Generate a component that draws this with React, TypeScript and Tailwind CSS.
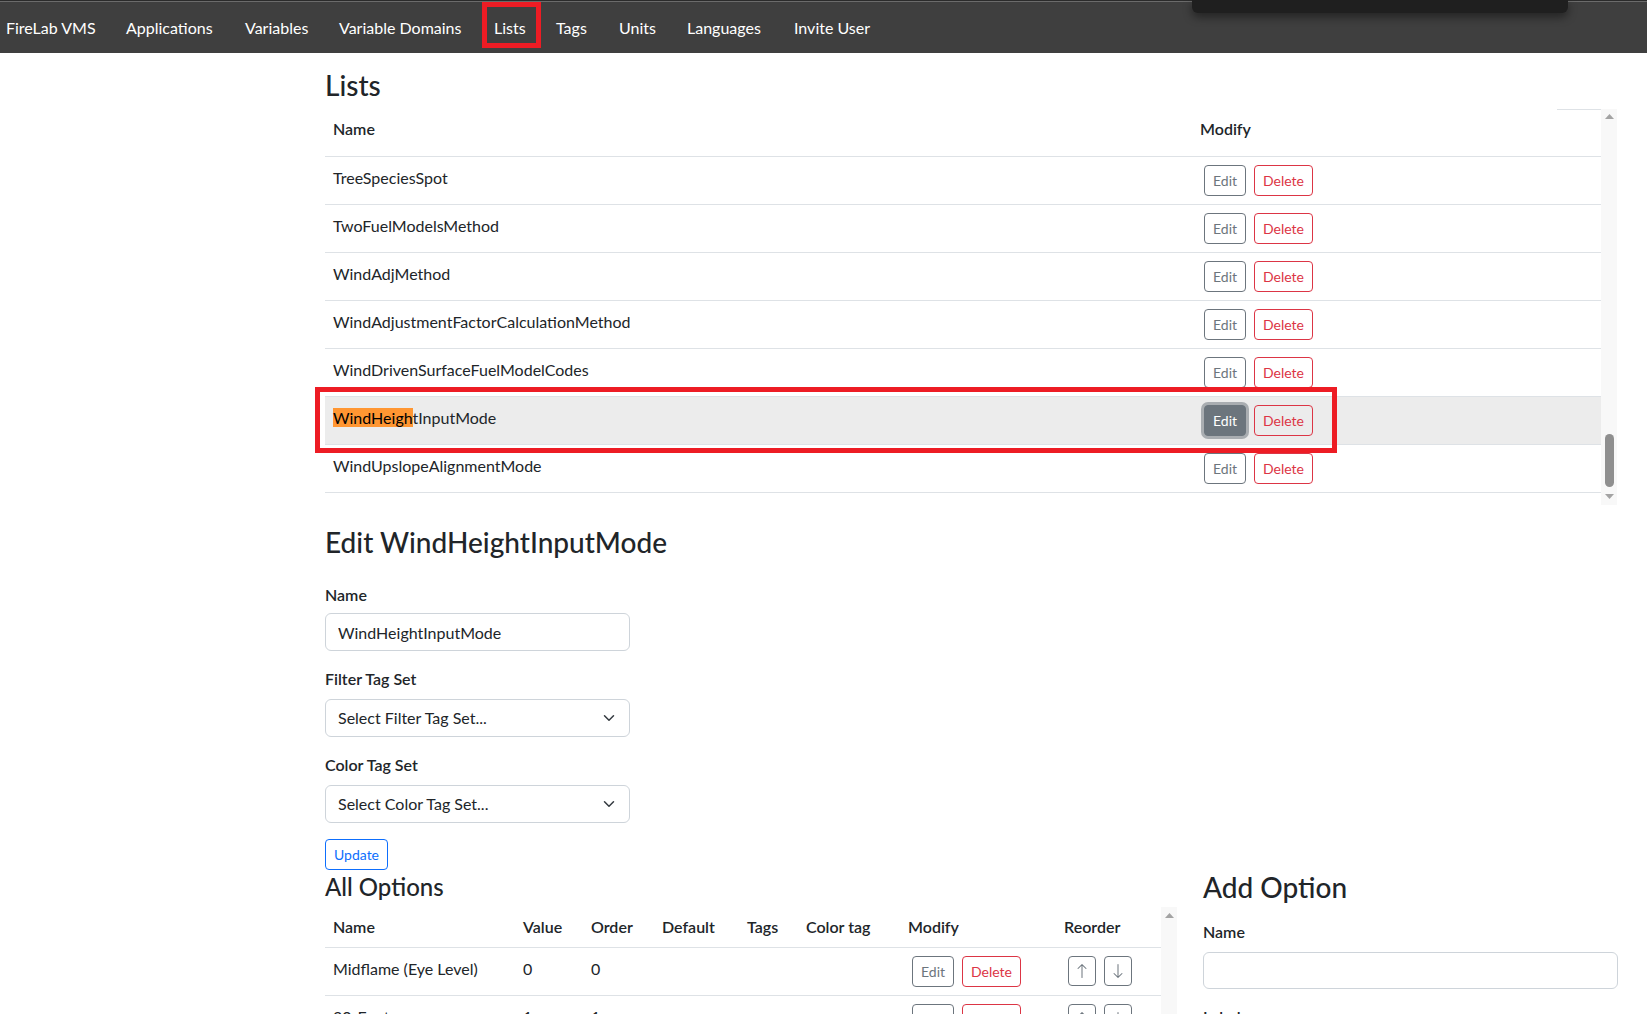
import React from 'react';

const navItems = [
  { label: 'FireLab VMS', w: 'w-[120px]' },
  { label: 'Applications', w: 'w-[119px]' },
  { label: 'Variables', w: 'w-[94px]' },
  { label: 'Variable Domains', w: 'w-[155px]' },
  { label: 'Lists', w: 'w-[62px]' },
  { label: 'Tags', w: 'w-[63px]' },
  { label: 'Units', w: 'w-[68px]' },
  { label: 'Languages', w: 'w-[107px]' },
  { label: 'Invite User', w: 'w-[120px]' },
];

const lists = [
  'TreeSpeciesSpot',
  'TwoFuelModelsMethod',
  'WindAdjMethod',
  'WindAdjustmentFactorCalculationMethod',
  'WindDrivenSurfaceFuelModelCodes',
  'WindHeightInputMode',
  'WindUpslopeAlignmentMode',
];

const options = [
  { name: 'Midflame (Eye Level)', value: '0', order: '0' },
  { name: '20-Foot', value: '1', order: '1' },
];

function EditBtn({ active }: { active?: boolean }) {
  if (active) {
    return (
      <button className="h-[31px] px-2 text-[14px] leading-[21px] rounded-[4px] border border-[#6c757d] bg-[#6c757d] text-white shadow-[0_0_0_3px_#a9adb1]">
        Edit
      </button>
    );
  }
  return (
    <button className="h-[31px] px-2 text-[14px] leading-[21px] rounded-[4px] border border-[#6c757d] text-[#6c757d]">
      Edit
    </button>
  );
}

function DeleteBtn() {
  return (
    <button className="h-[31px] px-2 text-[14px] leading-[21px] rounded-[4px] border border-[#dc3545] text-[#dc3545]">
      Delete
    </button>
  );
}

function UpTriangle() {
  return (
    <svg width="9" height="5" viewBox="0 0 9 5">
      <polygon points="0,5 4.5,0 9,5" fill="#a3a3a3" />
    </svg>
  );
}

function DownTriangle() {
  return (
    <svg width="9" height="5" viewBox="0 0 9 5">
      <polygon points="0,0 9,0 4.5,5" fill="#a3a3a3" />
    </svg>
  );
}

function Chevron() {
  return (
    <svg width="16" height="12" viewBox="0 0 16 16" fill="none">
      <path d="m2 5 6 6 6-6" stroke="#343a40" strokeWidth="2" strokeLinecap="round" strokeLinejoin="round" />
    </svg>
  );
}

function ArrowIcon({ down }: { down?: boolean }) {
  return (
    <svg width="16" height="16" viewBox="0 0 16 16" fill="#6c757d" className={down ? 'rotate-180' : ''}>
      <path d="M8 15a.5.5 0 0 0 .5-.5V2.707l3.146 3.147a.5.5 0 0 0 .708-.708l-4-4a.5.5 0 0 0-.708 0l-4 4a.5.5 0 1 0 .708.708L7.5 2.707V14.5a.5.5 0 0 0 .5.5" />
    </svg>
  );
}

function SelectBox({ text }: { text: string }) {
  return (
    <div className="h-[38px] border border-[#ced4da] rounded-[6px] pl-3 pr-3 flex items-center justify-between">
      <span>{text}</span>
      <Chevron />
    </div>
  );
}

export default function App() {
  return (
    <div className="min-h-screen bg-white font-['Lato',sans-serif] text-[#212529] text-[16px] leading-[24px]">
      <header className="relative bg-[#3f3f3f]">
        <div className="h-px bg-[#2b2b2b]" />
        <div className="h-px bg-[#6b6b6b]" />
        <nav className="h-[51px] flex items-center pl-[6px] text-white">
          {navItems.map((item) => (
            <a key={item.label} className={`${item.w} shrink-0 whitespace-nowrap`}>
              {item.label}
            </a>
          ))}
        </nav>
        <div className="absolute left-[1192px] top-0 w-[376px] h-[13px] bg-[#1f1f1f] rounded-b-[6px] shadow-[0_4px_10px_rgba(0,0,0,0.45)]" />
        <div className="absolute left-[482px] top-[2px] w-[59px] h-[46px] border-[5px] border-[#ed1c24]" />
      </header>

      <main className="pl-[325px] pt-4">
        <div className="relative w-[1293px]">
          <h2 className="mb-[6px] text-[28px] leading-[1.2] font-medium">Lists</h2>

          <div className="flex h-[396px] overflow-hidden">
            <div className="w-[1276px]">
              <div className="flex h-[48px] border-b border-[#dee2e6] font-semibold">
                <div className="w-[867px] px-2 pt-2">Name</div>
                <div className="flex-1 px-2 pt-2">Modify</div>
                <div className="w-[44px] self-start border-t border-[#dee2e6]" />
              </div>
              {lists.map((name) => {
                const active = name === 'WindHeightInputMode';
                return (
                  <div
                    key={name}
                    className={`flex h-[48px] border-b border-[#dee2e6] ${active ? 'bg-[#ececec]' : ''}`}
                  >
                    <div className="w-[867px] px-2 pt-[9px]">
                      {active ? (
                        <>
                          <span className="bg-[#ff9632] text-black">WindHeigh</span>tInputMode
                        </>
                      ) : (
                        name
                      )}
                    </div>
                    <div className="flex-1 pl-3 pt-2 flex items-start gap-2">
                      <EditBtn active={active} />
                      <DeleteBtn />
                    </div>
                  </div>
                );
              })}
            </div>
            <div className="w-[16px] bg-[#f8f8f8] flex flex-col items-center">
              <div className="h-[16px] flex items-center justify-center">
                <UpTriangle />
              </div>
              <div className="mt-[310px] w-[9px] h-[53px] rounded-full bg-[#8f8f8f]" />
              <div className="h-[16px] mt-[2px] flex items-center justify-center">
                <DownTriangle />
              </div>
            </div>
          </div>

          <div className="absolute left-[-10px] top-[318px] w-[1022px] h-[66px] border-[5px] border-[#ed1c24]" />

          <h2 className="mt-[21px] mb-[24px] text-[28px] leading-[1.2] font-medium">Edit WindHeightInputMode</h2>
          <div className="w-[305px]">
            <label className="block font-semibold mb-[6px]">Name</label>
            <input
              readOnly
              defaultValue="WindHeightInputMode"
              className="block w-full h-[38px] border border-[#ced4da] rounded-[6px] px-3 outline-none"
            />
            <label className="block font-semibold mt-4 mb-2">Filter Tag Set</label>
            <SelectBox text="Select Filter Tag Set..." />
            <label className="block font-semibold mt-4 mb-2">Color Tag Set</label>
            <SelectBox text="Select Color Tag Set..." />
            <button className="mt-4 h-[31px] px-2 text-[14px] leading-[21px] rounded-[4px] border border-[#0d6efd] text-[#0d6efd]">
              Update
            </button>
          </div>

          <div className="flex gap-[26px]">
            <div className="w-[852px]">
              <h4 className="pt-[3px] mb-[5px] text-[24px] leading-[1.2] font-medium">All Options</h4>
              <div className="flex h-[140px] overflow-hidden">
                <div className="w-[836px]">
                  <div className="flex h-[41px] border-b border-[#dee2e6] font-semibold">
                    <div className="w-[190px] px-2 pt-2">Name</div>
                    <div className="w-[68px] px-2 pt-2">Value</div>
                    <div className="w-[71px] px-2 pt-2">Order</div>
                    <div className="w-[85px] px-2 pt-2">Default</div>
                    <div className="w-[59px] px-2 pt-2">Tags</div>
                    <div className="w-[102px] px-2 pt-2">Color tag</div>
                    <div className="w-[156px] px-2 pt-2">Modify</div>
                    <div className="w-[105px] px-2 pt-2">Reorder</div>
                  </div>
                  {options.map((opt) => (
                    <div key={opt.name} className="flex h-[48px] border-b border-[#dee2e6]">
                      <div className="w-[190px] px-2 pt-[9px]">{opt.name}</div>
                      <div className="w-[68px] px-2 pt-[9px]">{opt.value}</div>
                      <div className="w-[71px] px-2 pt-[9px]">{opt.order}</div>
                      <div className="w-[85px] px-2 pt-2" />
                      <div className="w-[59px] px-2 pt-2" />
                      <div className="w-[102px] px-2 pt-2" />
                      <div className="w-[156px] pl-3 pt-2 flex items-start gap-2">
                        <EditBtn />
                        <DeleteBtn />
                      </div>
                      <div className="w-[105px] pl-3 pt-2 flex items-start gap-2">
                        <button className="w-[28px] h-[30px] rounded-[4px] border border-[#6c757d] flex items-center justify-center">
                          <ArrowIcon />
                        </button>
                        <button className="w-[28px] h-[30px] rounded-[4px] border border-[#6c757d] flex items-center justify-center">
                          <ArrowIcon down />
                        </button>
                      </div>
                    </div>
                  ))}
                </div>
                <div className="w-[16px] bg-[#f8f8f8] flex flex-col items-center">
                  <div className="h-[18px] flex items-center justify-center">
                    <UpTriangle />
                  </div>
                </div>
              </div>
            </div>

            <div className="w-[415px]">
              <h3 className="mt-[1px] mb-[15px] text-[28px] leading-[1.2] font-medium">Add Option</h3>
              <label className="block font-semibold mb-2">Name</label>
              <input readOnly className="block w-full h-[37px] border border-[#ced4da] rounded-[6px] px-3 outline-none" />
              <label className="block font-semibold mt-4 mb-2">Label</label>
            </div>
          </div>
        </div>
      </main>
    </div>
  );
}
